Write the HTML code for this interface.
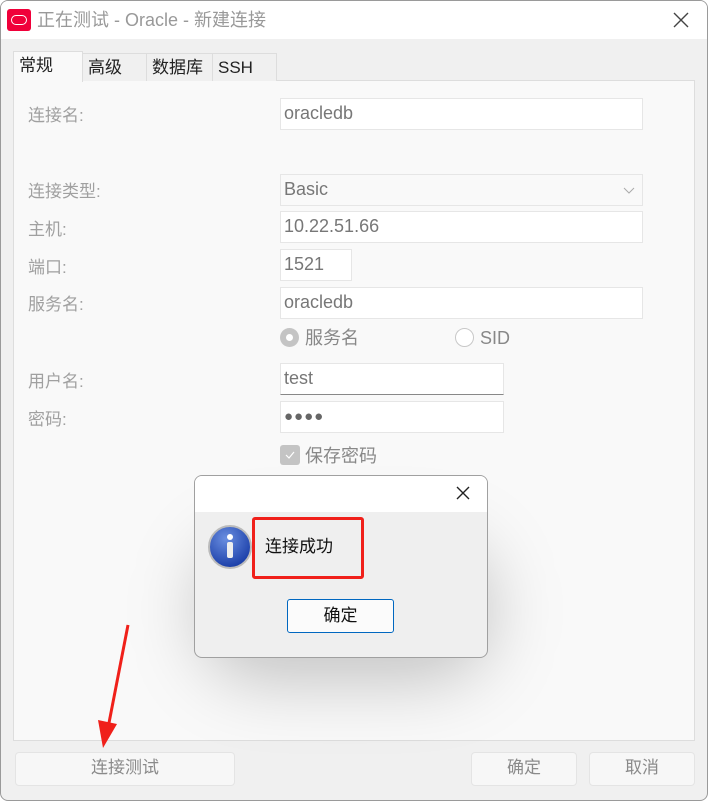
<!DOCTYPE html>
<html><head><meta charset="utf-8"><style>
*{box-sizing:border-box;margin:0;padding:0}
body{width:708px;height:801px;background:#fff;font-family:"Liberation Sans","Noto Sans CJK SC",sans-serif;position:relative;overflow:hidden}
.win{position:absolute;left:0;top:0;width:708px;height:801px;border:1px solid #9a9a9a;border-radius:8px;background:#f0f0f0;overflow:hidden}
.title{position:absolute;left:0;top:0;width:706px;height:38px;background:#fff}
.a{position:absolute}
.lbl{position:absolute;left:27px;font-size:17px;color:#a0a0a0;line-height:20px}
.inp{position:absolute;left:279px;height:32px;background:#fff;border:1px solid #e6e6e6;font-size:18px;color:#777;padding:4px 0 0 3px}
.btn{position:absolute;background:#f7f7f7;border:1px solid #e4e4e4;border-radius:4px;font-size:17px;color:#8a8a8a;text-align:center;line-height:30px}
.tab{position:absolute;top:52px;height:28px;border:1px solid #ddd;border-bottom:none;font-size:17px;color:#222;padding:1px 0 0 5px;background:#f0f0f0;line-height:26px}
</style></head><body>
<div class="win">
<div class="title"></div>
<div class="a" style="left:6px;top:8px;width:24px;height:22px;background:#f0003a;border-radius:3px"><div class="a" style="left:4px;top:6px;width:16px;height:10px;border:1.5px solid #fff;border-radius:5px"></div></div>
<div class="a" style="left:36px;top:8px;font-size:18px;color:#999;line-height:22px">正在测试 - Oracle - 新建连接</div>
<svg class="a" style="left:672px;top:11px" width="16" height="16"><path d="M1 1L15 15M15 1L1 15" stroke="#444" stroke-width="1.4"/></svg>
<div class="a" style="left:12px;top:79px;width:682px;height:661px;background:#f9f9f9;border:1px solid #ddd"></div>
<div class="tab" style="left:12px;top:50px;width:70px;height:31px;background:#f9f9f9">常规</div>
<div class="tab" style="left:81px;width:65px">高级</div>
<div class="tab" style="left:145px;width:67px">数据库</div>
<div class="tab" style="left:211px;width:65px">SSH</div>
<div class="lbl" style="top:105px">连接名:</div>
<div class="inp" style="top:97px;width:363px">oracledb</div>
<div class="lbl" style="top:181px">连接类型:</div>
<div class="inp" style="top:173px;width:363px;background:#f9f9f9">Basic<svg class="a" style="left:342px;top:12px" width="12" height="8"><path d="M1 1L6 6L11 1" stroke="#aaa" fill="none"/></svg></div>
<div class="lbl" style="top:219px">主机:</div>
<div class="inp" style="top:210px;width:363px">10.22.51.66</div>
<div class="lbl" style="top:257px">端口:</div>
<div class="inp" style="top:248px;width:72px">1521</div>
<div class="lbl" style="top:294px">服务名:</div>
<div class="inp" style="top:286px;width:363px">oracledb</div>
<div class="a" style="left:279px;top:327px;width:19px;height:19px;border-radius:50%;background:#c4c4c4"><div class="a" style="left:6px;top:6px;width:7px;height:7px;border-radius:50%;background:#fff"></div></div>
<div class="a" style="left:304px;top:326px;font-size:18px;color:#888;line-height:22px">服务名</div>
<div class="a" style="left:454px;top:327px;width:19px;height:19px;border-radius:50%;border:1px solid #c8c8c8;background:#fff"></div>
<div class="a" style="left:479px;top:326px;font-size:18px;color:#888;line-height:22px">SID</div>
<div class="lbl" style="top:371px">用户名:</div>
<div class="inp" style="top:362px;width:224px;border-bottom:1px solid #888">test</div>
<div class="lbl" style="top:409px">密码:</div>
<div class="inp" style="top:400px;width:224px;font-size:15px;letter-spacing:1px;color:#666;padding-top:6px">●●●●</div>
<div class="a" style="left:279px;top:444px;width:20px;height:20px;border-radius:3px;background:#c4c4c4"><svg width="20" height="20"><path d="M6 10L9 13L14 7" stroke="#fff" stroke-width="1.2" fill="none"/></svg></div>
<div class="a" style="left:304px;top:444px;font-size:18px;color:#888;line-height:22px">保存密码</div>
<div class="btn" style="left:14px;top:751px;width:220px;height:34px">连接测试</div>
<div class="btn" style="left:470px;top:751px;width:106px;height:34px">确定</div>
<div class="btn" style="left:588px;top:751px;width:106px;height:34px">取消</div>
</div>
<div class="a" style="left:200px;top:540px;width:290px;height:140px;border-radius:60px;background:rgba(0,0,0,.22);filter:blur(35px)"></div>
<div class="a" style="left:194px;top:475px;width:294px;height:183px;border:1.5px solid #a0a0a0;border-radius:8px;background:#efefef;overflow:hidden">
<div class="a" style="left:0;top:0;width:294px;height:36px;background:#fff"></div>
<svg class="a" style="left:261px;top:10px" width="14" height="14"><path d="M1 1L13 13M13 1L1 13" stroke="#222" stroke-width="1.4"/></svg>
<svg class="a" style="left:12px;top:48px" width="46" height="46"><defs><radialGradient id="g" cx="40%" cy="30%" r="70%"><stop offset="0" stop-color="#6a8ee0"/><stop offset="1" stop-color="#1a3ea8"/></radialGradient></defs><circle cx="23" cy="23" r="21" fill="url(#g)" stroke="#bbb" stroke-width="2"/><circle cx="23" cy="13" r="3" fill="#fff"/><rect x="20" y="18" width="6" height="16" rx="2" fill="#eee"/></svg>
<div class="a" style="left:57px;top:41px;width:112px;height:62px;border:3px solid #f0201a;border-radius:3px"></div>
<div class="a" style="left:70px;top:61px;font-size:17px;color:#111;line-height:20px">连接成功</div>
<div class="a" style="left:92px;top:123px;width:107px;height:34px;border:1px solid #0067c0;border-radius:3px;background:#fbfbfb;font-size:17px;text-align:center;line-height:32px;color:#111">确定</div>
</div>
<svg class="a" style="left:90px;top:620px" width="50" height="130"><path d="M38 5L18 108" stroke="#f0201a" stroke-width="3"/><path d="M8 100L13 128L27 104Z" fill="#f0201a"/></svg>
</body></html>
